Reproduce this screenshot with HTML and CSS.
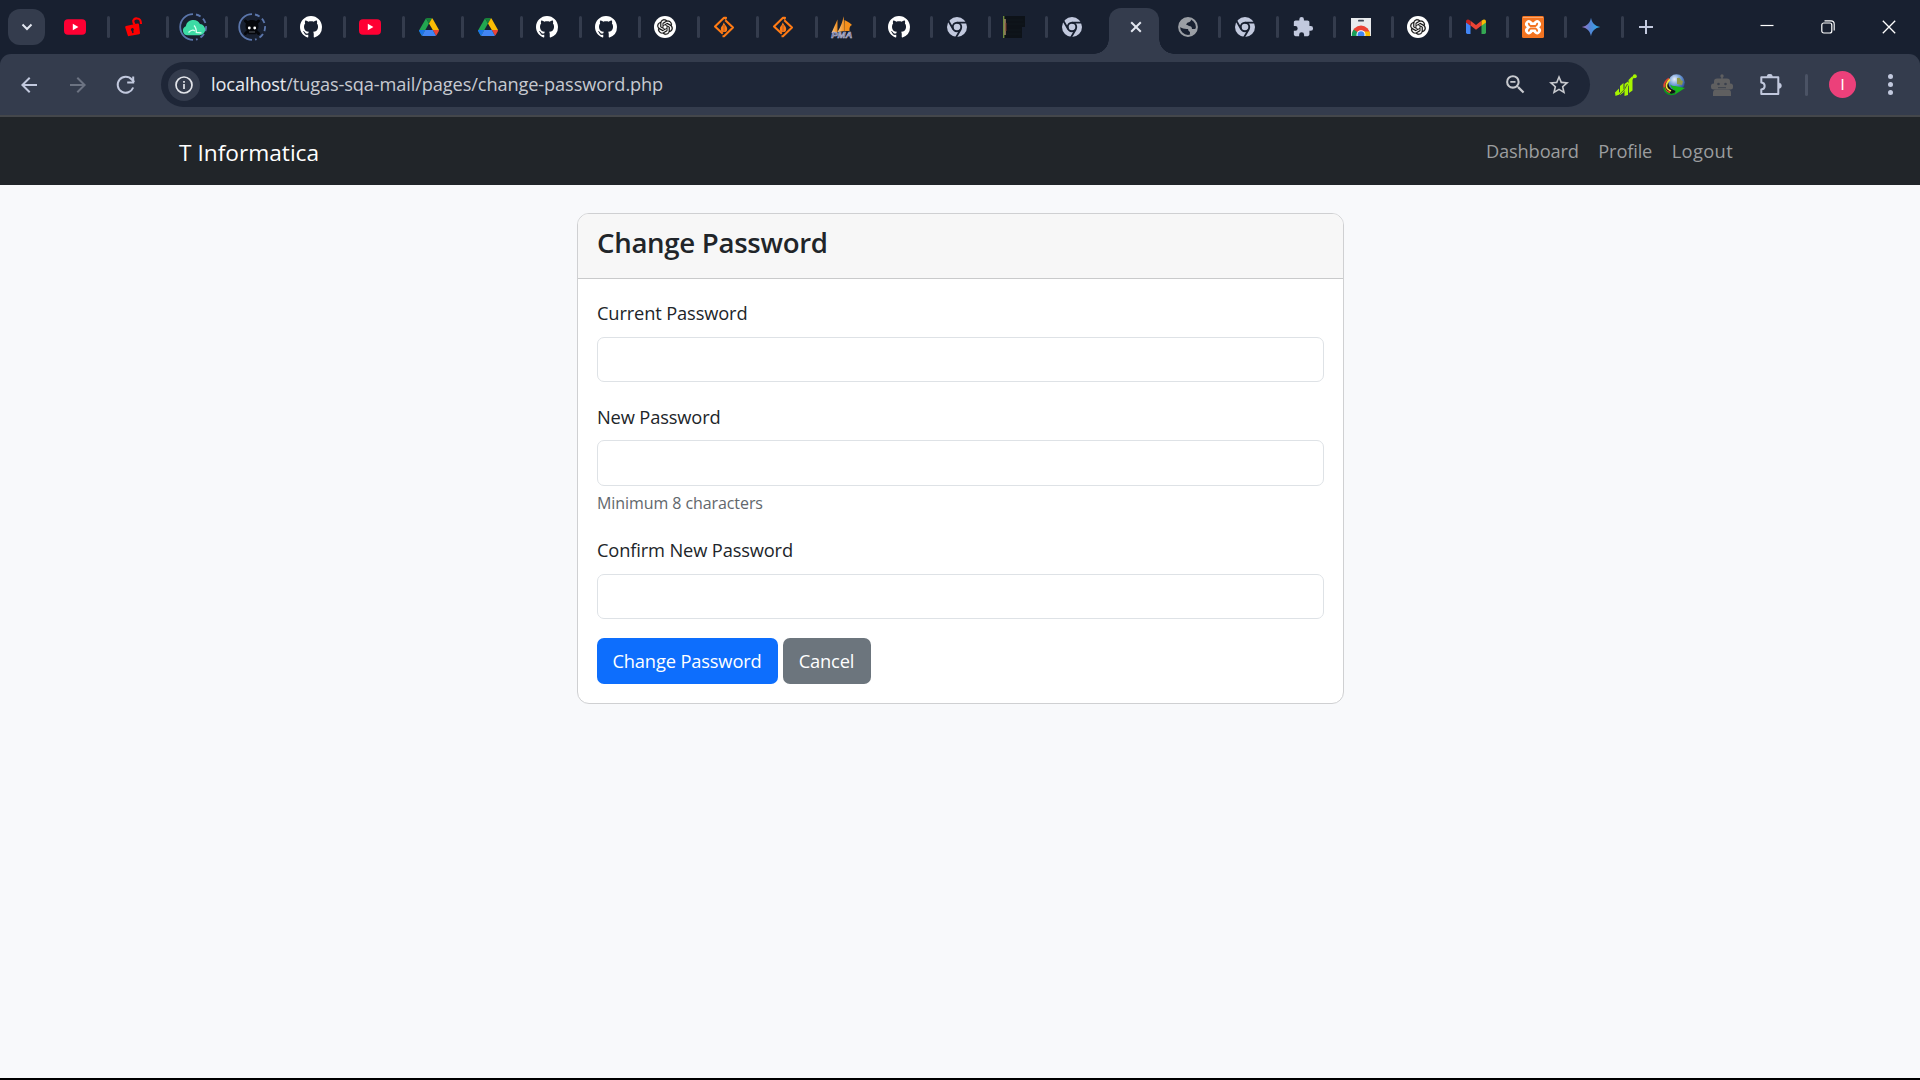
FILE: index.html
```html
<!DOCTYPE html>
<html lang="en">
<head>
<meta charset="utf-8">
<title>Change Password</title>
<link rel="stylesheet" href="styles.css">
</head>
<body>
<svg class="sprite" aria-hidden="true">
  <defs>
    <linearGradient id="gem" x1="0" y1="0" x2="1" y2="0"><stop offset="0" stop-color="#a46fc0"/><stop offset=".45" stop-color="#5585d6"/><stop offset="1" stop-color="#25b0ee"/></linearGradient>
    <linearGradient id="sail" x1="0" y1="0" x2="1" y2="0"><stop offset="0" stop-color="#f9c98c"/><stop offset="1" stop-color="#f08a16"/></linearGradient>
    <radialGradient id="ball" cx=".38" cy=".3" r=".8"><stop offset="0" stop-color="#e9f0fa"/><stop offset=".45" stop-color="#6f9bd6"/><stop offset="1" stop-color="#183a80"/></radialGradient>
    <clipPath id="store-clip"><rect x="1" y="2" width="20" height="18"/></clipPath>
  </defs>
  <symbol id="youtube" viewBox="0 0 22 22"><rect y="3.2" width="22" height="15.6" rx="4" fill="#ff0033"/><path d="M8.8 7.8v6.4l5.6-3.2z" fill="#fff"/></symbol>
  <symbol id="lock" viewBox="0 0 22 22"><path d="M3 10.2l11.6-2.4q1.200-.2 1.400.8l1 8.600q.1 1-.9 1.300l-10 1.800q-1.200.2-1.400-.8L2.200 11.500q-.2-1.100.8-1.300z" fill="#fe0000" transform="translate(0 -.2)"/><path d="M11.500 8.500L10.500 6.600C9.300 3.600 12 2.300 14 2.500C17.500 2.800 18 4.500 18 8" fill="none" stroke="#fe0000" stroke-width="2.200"/><path d="M9.300 12a1.600 1.600 0 0 1 1 2.800l.3 2.300-1.300.2-.6-2.300a1.600 1.600 0 0 1 .6-3z" fill="#182030"/></symbol>
  <symbol id="cloud" viewBox="0 0 28 28"><path d="M14 1.200a12.800 12.800 0 0 0 0 25.600" fill="none" stroke="#5b76ab" stroke-width="1.800"/><path d="M17 1.500a12.800 12.800 0 0 1 0 25" fill="none" stroke="#5b76ab" stroke-width="1.800" stroke-dasharray="5 3.200"/><path d="M9 22.200a4.700 4.700 0 0 1-2.200-9 7.600 7.600 0 0 1 14.200-2.200 5.600 5.600 0 0 1-.8 11.200z" fill="#3ddba5"/><path d="M15 12.500c2 2 2.500 4 2.300 7.500M9.500 19.500c2-2 4-3.500 6.500-1.500M17.500 19.500c1.500 0 3 .3 5 .3" fill="none" stroke="#d8fff0" stroke-width="1.300"/></symbol>
  <symbol id="skull" viewBox="0 0 28 28"><path d="M14 1.200a12.800 12.800 0 0 0 0 25.600" fill="none" stroke="#5b76ab" stroke-width="1.800"/><path d="M17 1.500a12.800 12.800 0 0 1 0 25" fill="none" stroke="#5b76ab" stroke-width="1.800" stroke-dasharray="5 3.200"/><path d="M7.500 8l13 12.500M20.500 8L7.500 20.500" stroke="#05070b" stroke-width="3" stroke-linecap="round"/><path d="M14 7c4.600 0 6.500 2.700 6.500 6.300 0 2.700-1 3.700-2.700 4.400v3.600h-7.600v-3.600c-1.700-.7-2.700-1.700-2.700-4.400C7.500 9.700 9.400 7 14 7z" fill="#05070b"/><circle cx="11.300" cy="15" r="1.400" fill="#fff"/><circle cx="16.700" cy="15" r="1.400" fill="#fff"/><path d="M11 19h6" stroke="#777c85" stroke-width=".7"/></symbol>
  <symbol id="github" viewBox="0 0 16 16"><path fill="#fff" d="M8 0C3.580 0 0 3.580 0 8c0 3.540 2.290 6.530 5.470 7.590.4.070.55-.17.55-.38 0-.19-.01-.82-.01-1.490-2.010.37-2.530-.49-2.690-.94-.09-.23-.48-.94-.82-1.130-.28-.15-.68-.52-.01-.53.63-.01 1.080.58 1.230.82.72 1.210 1.870.87 2.330.66.07-.52.28-.87.51-1.070-1.780-.2-3.640-.89-3.640-3.950 0-.87.31-1.590.82-2.150-.08-.2-.36-1.020.08-2.120 0 0 .67-.21 2.200.82.64-.18 1.320-.27 2-.27s1.360.09 2 .27c1.530-1.040 2.200-.82 2.200-.82.44 1.100.16 1.920.08 2.120.51.56.82 1.270.82 2.150 0 3.070-1.870 3.750-3.650 3.950.29.25.54.73.54 1.480 0 1.070-.01 1.930-.01 2.200 0 .21.15.46.55.38A8.010 8.010 0 0 0 16 8c0-4.420-3.580-8-8-8z"/></symbol>
  <symbol id="drive" viewBox="0 0 22 22"><path d="M1 14.500L8 2.300l3 5.200-6.900 12.200q-.5-.3-.8-.8z" fill="#22a650"/><path d="M8 2.300q.4-.3 1-.3h4q.6 0 1 .3l-3 5.200z" fill="#188038"/><path d="M14 2.300q.5.300.8.800L21 14h-6.200L11 7.500z" fill="#fbbc04"/><path d="M1 14h6.200l-3.100 5.700q-.6-.3-.9-.9L1.300 15.500Q1 14.800 1 14z" fill="#1a73e8"/><path d="M14.800 14H21q0 .8-.3 1.500l-1.900 3.300q-.3.600-.9.900z" fill="#ea4335"/><path d="M7.200 14h7.600l3.100 5.700q-.4.300-1 .3H5.100q-.6 0-1-.3z" fill="#4285f4"/></symbol>
  <symbol id="gpt" viewBox="0 0 22 22"><circle cx="11" cy="11" r="11" fill="#fff"/><path transform="translate(3.200 3.200) scale(.65)" fill="#0c0c0c" stroke="#0c0c0c" stroke-width=".3" d="M22.2819 9.8211a5.9847 5.9847 0 0 0-.5157-4.9108 6.0462 6.0462 0 0 0-6.5098-2.9A6.0651 6.0651 0 0 0 4.9807 4.1818a5.9847 5.9847 0 0 0-3.9977 2.9 6.0462 6.0462 0 0 0 .7427 7.0966 5.98 5.98 0 0 0 .511 4.9107 6.051 6.051 0 0 0 6.5146 2.9001A5.9847 5.9847 0 0 0 13.2599 24a6.0557 6.0557 0 0 0 5.7718-4.2058 5.9894 5.9894 0 0 0 3.9977-2.9001 6.0557 6.0557 0 0 0-.7475-7.0729zm-9.022 12.6081a4.4755 4.4755 0 0 1-2.8764-1.0408l.1419-.0804 4.7783-2.7582a.7948.7948 0 0 0 .3927-.6813v-6.7369l2.02 1.1686a.071.071 0 0 1 .038.052v5.5826a4.504 4.504 0 0 1-4.4945 4.4944zm-9.6607-4.1254a4.4708 4.4708 0 0 1-.5346-3.0137l.142.0852 4.783 2.7582a.7712.7712 0 0 0 .7806 0l5.8428-3.3685v2.3324a.0804.0804 0 0 1-.0332.0615L9.74 19.9502a4.4992 4.4992 0 0 1-6.1408-1.6464zM2.3408 7.8956a4.485 4.485 0 0 1 2.3655-1.9728V11.6a.7664.7664 0 0 0 .3879.6765l5.8144 3.3543-2.0201 1.1685a.0757.0757 0 0 1-.071 0l-4.8303-2.7865A4.504 4.504 0 0 1 2.3408 7.872zm16.5963 3.8558L13.1038 8.364 15.1192 7.2a.0757.0757 0 0 1 .071 0l4.8303 2.7913a4.4944 4.4944 0 0 1-.6765 8.1042v-5.6772a.79.79 0 0 0-.407-.667zm2.0107-3.0231l-.142-.0852-4.7735-2.7818a.7759.7759 0 0 0-.7854 0L9.409 9.2297V6.8974a.0662.0662 0 0 1 .0284-.0615l4.8303-2.7866a4.4992 4.4992 0 0 1 6.6802 4.66zM8.3065 12.863l-2.02-1.1638a.0804.0804 0 0 1-.038-.0567V6.0742a4.4992 4.4992 0 0 1 7.3757-3.4537l-.142.0805L8.704 5.459a.7948.7948 0 0 0-.3927.6813zm1.0976-2.3654l2.602-1.4998 2.6069 1.4998v2.9994l-2.5974 1.4997-2.6067-1.4997Z"/></symbol>
  <symbol id="forge" viewBox="0 0 22 22"><path d="M9.800 17.800L2 10.400 11 1.800h2L12 3.300M12.300 4.200L20 11.600 11 20.200H9.500" fill="none" stroke="#ff7b15" stroke-width="2.100" stroke-linejoin="round"/><path d="M11 6.300c.3 2.700 3.200 4 3.200 6.600a3.200 3.200 0 0 1-6.400 0c0-2.200 1.400-2.600 1.900-3.900.5-1 .6-1.800 1.300-2.700z" fill="#ff7b15"/><path d="M11 9v6.500" stroke="#a85a28" stroke-width="1"/></symbol>
  <symbol id="chrome" viewBox="0 0 22 22"><circle cx="11" cy="11" r="10" fill="#c2c9de"/><circle cx="11" cy="11" r="5.200" fill="#182030"/><circle cx="11" cy="11" r="3.300" fill="#c2c9de"/><path d="M11 6.600H21M7.200 13.200L2.200 4.500M14.800 13.200L9.800 21.800" stroke="#182030" stroke-width="1.800"/></symbol>
  <symbol id="dark" viewBox="0 0 22 22"><path d="M1 0h21v11h-3v11H1z" fill="#0d1218"/><path d="M3 4h17M3 8h18M3 14h15M3 18h15" stroke="#11171d"/><path d="M.7 0v22" stroke="#6c8a3d" stroke-width="1.400"/><path d="M2 3v16" stroke="#c9a878" stroke-width="1.200"/><path d="M3 7v8" stroke="#8b3a2a" stroke-width=".8"/></symbol>
  <symbol id="globe" viewBox="0 0 22 22"><circle cx="11" cy="11" r="8.900" fill="none" stroke="#9b9fa5" stroke-width="2"/><path d="M3 8C5 3 10 1.500 14 3q.5 2-1.500 3Q10 6 9 8.500q2 .5 3 1.500 3 0 3 3h3.500q.5-2 1.500-2-.5 6-6.500 8.500-1-2-.5-3.500-2-1-2-3Q7 13.500 2.500 11z" fill="#9b9fa5"/></symbol>
  <symbol id="puzzle" viewBox="0 0 24 24"><path fill="#c2c9de" d="M20.500 11H19V7c0-1.100-.9-2-2-2h-4V3.500a2.500 2.500 0 0 0-5 0V5H4c-1.100 0-1.990.9-1.990 2v3.800H3.500a2.700 2.700 0 0 1 0 5.400H2V20c0 1.100.9 2 2 2h3.800v-1.500a2.700 2.700 0 0 1 5.400 0V22H17c1.100 0 2-.9 2-2v-4h1.500a2.500 2.500 0 0 0 0-5z"/></symbol>
  <symbol id="store" viewBox="0 0 22 22"><g clip-path="url(#store-clip)"><path d="M1 2h20v18H1z" fill="#e8eaed"/><rect x="8" y="3.800" width="6" height="1.800" rx=".9" fill="#3c4454"/><circle cx="11" cy="18.500" r="9" fill="#ea4335"/><path d="M11 18.500V15.500h8.500a9 9 0 0 1 0 6.500h-9z" fill="#fbbc04"/><path d="M11 18.500L3.500 13.500Q1 18 2 22h9z" fill="#18a05a"/><circle cx="11" cy="18.800" r="4.500" fill="#fff"/><circle cx="11" cy="18.800" r="3.500" fill="#4285f4"/></g></symbol>
  <symbol id="gmail" viewBox="0 0 22 22"><path d="M1 6l4.500 3.200V18H2.400Q1 18 1 16.600z" fill="#4285f4"/><path d="M16.500 9.200L21 6v10.600Q21 18 19.600 18h-3.100z" fill="#34a853"/><path d="M5.500 4.800L11 9l5.500-4.200v4.800L11 13.800 5.500 9.600z" fill="#ea4335"/><path d="M1 5.500Q1 3.500 2.800 3.400 3.700 3.400 5.500 4.800v5L1 6.500z" fill="#c5221f"/><path d="M16.500 4.800q1.800-1.400 2.700-1.400Q21 3.500 21 5.500v1l-4.500 3.300z" fill="#fbbc04"/></symbol>
  <symbol id="xampp" viewBox="0 0 22 22"><rect width="22" height="22" rx="1.500" fill="#f37421"/><path d="M1 1.500h20" stroke="#f9a56d"/><path d="M6.800 8L11 11.200 15.200 8M6.800 14.500L11 11.200l4.200 3.300" fill="none" stroke="#fff" stroke-width="7.400" stroke-linecap="round" stroke-linejoin="round"/><path d="M11 1.900l1.300 3.300L11 6.400 9.700 5.200zM11 20.500l1.300-3.300L11 16 9.700 17.200z" fill="#f37421"/><path d="M6.800 7.700q.2 1.500 1.700 2.300h5q1.500-.8 1.700-2.300M6.800 14.800q.2-1.500 1.700-2.300h5q1.500.8 1.700 2.300" fill="none" stroke="#f37421" stroke-width="1.900" stroke-linecap="round"/></symbol>
  <symbol id="gemini" viewBox="0 0 22 22"><path d="M11 1.800c.8 5 4.200 8.400 9.200 9.200-5 .8-8.400 4.200-9.200 9.200-.8-5-4.200-8.400-9.200-9.200 5-.8 8.400-4.200 9.200-9.200z" fill="url(#gem)"/></symbol>
  <symbol id="arrow" viewBox="0 0 24 24"><path fill="currentColor" d="M20 11H7.830l5.590-5.590L12 4l-8 8 8 8 1.410-1.410L7.830 13H20v-2z"/></symbol>
</svg>

<header class="browser">
  <div class="tabstrip">
    <button class="tab-search"><svg width="12" height="8" viewBox="0 0 12 8"><path d="M1.500 1.500L6 6l4.500-4.500" fill="none" stroke="#e3e7f0" stroke-width="2"/></svg></button>
    <div class="tabs">
      <div class="tab"><svg><use href="#youtube"/></svg></div>
      <div class="tab"><svg><use href="#lock"/></svg></div>
      <div class="tab ringed"><svg><use href="#cloud"/></svg></div>
      <div class="tab ringed"><svg><use href="#skull"/></svg></div>
      <div class="tab"><svg><use href="#github"/></svg></div>
      <div class="tab"><svg><use href="#youtube"/></svg></div>
      <div class="tab"><svg><use href="#drive"/></svg></div>
      <div class="tab"><svg><use href="#drive"/></svg></div>
      <div class="tab"><svg><use href="#github"/></svg></div>
      <div class="tab"><svg><use href="#github"/></svg></div>
      <div class="tab"><svg><use href="#gpt"/></svg></div>
      <div class="tab"><svg><use href="#forge"/></svg></div>
      <div class="tab"><svg><use href="#forge"/></svg></div>
      <div class="tab narrow"><svg viewBox="0 0 22 22"><path d="M.5 17Q4 9 6.500 3.500V16z" fill="url(#sail)"/><path d="M6.500 16Q11.500 8 12.500.3q1.200 8 1 14.700z" fill="url(#sail)"/><path d="M13.500 4q6 3 7.500 5-3 1-2.500 6h-5z" fill="#f5901c"/><text class="pma" x=".3" y="21.700" textLength="21" lengthAdjust="spacingAndGlyphs">PMA</text></svg></div>
      <div class="tab narrow"><svg><use href="#github"/></svg></div>
      <div class="tab narrow"><svg><use href="#chrome"/></svg></div>
      <div class="tab narrow"><svg><use href="#dark"/></svg></div>
      <div class="tab narrow plain"><svg><use href="#chrome"/></svg></div>
      <div class="tab-active"><svg width="12" height="12" viewBox="0 0 12 12"><path d="M1.200 1.200l9.600 9.600M10.800 1.200l-9.600 9.600" stroke="#e3e7f0" stroke-width="2"/></svg></div>
      <div class="tab narrow"><svg><use href="#globe"/></svg></div>
      <div class="tab narrow"><svg><use href="#chrome"/></svg></div>
      <div class="tab narrow"><svg><use href="#puzzle"/></svg></div>
      <div class="tab narrow"><svg><use href="#store"/></svg></div>
      <div class="tab narrow"><svg><use href="#gpt"/></svg></div>
      <div class="tab narrow"><svg><use href="#gmail"/></svg></div>
      <div class="tab narrow"><svg><use href="#xampp"/></svg></div>
      <div class="tab narrow"><svg><use href="#gemini"/></svg></div>
    </div>
    <svg class="new-tab" width="14" height="14" viewBox="0 0 14 14"><path d="M7 0v14M0 7h14" stroke="#c2c9de" stroke-width="2"/></svg>
    <div class="window-buttons">
      <svg width="14" height="14" viewBox="0 0 14 14"><path d="M.5 5.500h13" stroke="#fff" stroke-width="1.200"/></svg>
      <svg width="14" height="14" viewBox="0 0 14 14"><rect x=".8" y="3" width="10" height="10" rx="2" fill="none" stroke="#fff" stroke-width="1.200"/><path d="M3.500 .9H10a3.200 3.200 0 0 1 3.200 3.200v6.400" fill="none" stroke="#fff" stroke-width="1.100"/></svg>
      <svg width="14" height="14" viewBox="0 0 14 14"><path d="M.8.8l12.400 12.400M13.200.8L.8 13.200" stroke="#fff" stroke-width="1.300"/></svg>
    </div>
  </div>

  <div class="toolbar">
    <div class="nav-buttons">
      <svg class="back"><use href="#arrow"/></svg>
      <svg class="forward"><use href="#arrow"/></svg>
      <svg class="reload" viewBox="0 0 24 24"><path d="M19.200 14.500a8 8 0 1 1-1.400-8L20.200 9" fill="none" stroke="#c2c9de" stroke-width="2"/><path d="M19.200 3.500v6h-6" fill="none" stroke="#c2c9de" stroke-width="2"/></svg>
    </div>
    <div class="omnibox">
      <span class="site-info"><svg width="18" height="18" viewBox="0 0 18 18"><circle cx="9" cy="9" r="8" fill="none" stroke="#e3e5ea" stroke-width="1.700"/><path d="M9 8v5M9 5v1.700" stroke="#e3e5ea" stroke-width="1.700"/></svg></span>
      <span class="url"><b>localhost</b>/tugas-sqa-mail/pages/change-password.php</span>
      <svg class="omni-icon" viewBox="0 0 24 24"><path fill="#c7c9ce" d="M15.500 14h-.79l-.28-.27A6.470 6.470 0 0 0 16 9.500 6.500 6.500 0 1 0 9.500 16c1.610 0 3.090-.59 4.230-1.570l.27.28v.79l5 4.990L20.490 19l-4.990-5zm-6 0C7.010 14 5 11.990 5 9.500S7.010 5 9.500 5 14 7.010 14 9.500 11.990 14 9.500 14zM7 8.700h5v1.600H7z"/></svg>
      <svg class="omni-icon star" viewBox="0 0 24 24"><path fill="#c7c9ce" d="M22 9.240l-7.190-.62L12 2 9.190 8.630 2 9.240l5.460 4.730L5.820 21 12 17.270 18.180 21l-1.630-7.030L22 9.240zM12 15.400l-3.760 2.270 1-4.280-3.320-2.880 4.380-.38L12 6.100l1.710 4.040 4.380.38-3.320 2.880 1 4.280L12 15.400z"/></svg>
    </div>
    <div class="extensions">
      <svg width="22" height="22" viewBox="0 0 22 22"><g fill="#a6f500"><path d="M0 18.500l4-4v6L.500 22z"/><path d="M5 12l3.500-3v9.500L5 21z"/><path d="M9.500 10L13 7.500V21l-3.500 1z"/><path d="M13.500 6l4-4v14.500l-3.500 2.500z"/><circle cx="19.800" cy="2.200" r="2"/></g><path d="M2 20.500C6 19 10 16 13 11S17 3.500 20 2" fill="none" stroke="#a6f500" stroke-width="1.500"/><path d="M5 20q5-4 7.500-10" fill="none" stroke="#3f5b22" stroke-width=".8"/></svg>
      <svg width="22" height="22" viewBox="0 0 22 22"><path d="M7 3.500C-1.500 8-1 19 8 20.500l5-3L6 12z" fill="#111"/><circle cx="13.500" cy="8.500" r="8.300" fill="url(#ball)"/><path d="M14 4q3-1 3.500 1t2.500 2l-1 4-5-1z" fill="#8f9a46"/><path d="M6 4.500C-1 9 0 17 7 18.500" fill="none" stroke="#e0442f" stroke-width="1.800"/><path d="M7 5.500C2 10 2 14.500 8 17" fill="none" stroke="#f5e03c" stroke-width="1.700"/><path d="M1 13.500Q2 19.500 8 20.500L12 20" fill="none" stroke="#0c9a20" stroke-width="1.600"/><path d="M7 10.500q3 2 5 1.500l10 2-10 6.500 .5-4Q9 16 7 10.500z" fill="#18b81c"/></svg>
      <svg width="22" height="22" viewBox="0 0 22 22"><g fill="#5f5f60"><circle cx="11" cy="2" r="1.700"/><path d="M10.300 2h1.400v3h-1.400z"/><rect x="3" y="4.500" width="16" height="10.500" rx="3"/><rect x="0" y="9.500" width="22" height="6" rx="2.500"/><path d="M2 22v-3q0-3.500 3-3.500h12q3 0 3 3.500v3z"/></g><circle cx="7.500" cy="10" r="1.300" fill="#3a404c"/><circle cx="14.500" cy="10" r="1.300" fill="#3a404c"/><path d="M7 13.700h8" stroke="#3a404c" stroke-width="1"/></svg>
      <svg class="ext-menu" width="22" height="22" viewBox="0 0 22 22"><path d="M1.300 3.200h17V20H1.300v-4.500c4.500-.5 4.500-6.500 0-7z" fill="none" stroke="#c2c9de" stroke-width="2" stroke-linejoin="round"/><path d="M7 2.800a2.700 2.700 0 0 1 5.400 0zM18.700 9a2.700 2.700 0 0 1 0 5.400z" fill="#c2c9de" stroke="#c2c9de" stroke-width=".6"/></svg>
    </div>
    <span class="divider"></span>
    <span class="avatar">I</span>
    <span class="menu"><i></i><i></i><i></i></span>
  </div>
</header>

<nav class="navbar">
  <a class="brand">T Informatica</a>
  <div class="links"><a>Dashboard</a><a>Profile</a><a class="logout">Logout</a></div>
</nav>

<main class="page">
  <section class="card">
    <div class="card-header"><h4>Change Password</h4></div>
    <form class="card-body">
      <div class="field first"><label for="cur">Current Password</label><input id="cur" type="password"></div>
      <div class="field with-hint"><label for="new">New Password</label><input id="new" type="password"><small>Minimum 8 characters</small></div>
      <div class="field"><label for="conf">Confirm New Password</label><input id="conf" type="password"></div>
      <div class="actions"><button class="btn primary" type="button">Change Password</button><a class="btn secondary">Cancel</a></div>
    </form>
  </section>
</main>
</body>
</html>
```
FILE: styles.css
```css
* { box-sizing: border-box; }

body {
  margin: 0;
  height: 1080px;
  display: flex;
  flex-direction: column;
  overflow: hidden;
  background: #f8f9fb;
  border-bottom: 2px solid #000;
  color: #212529;
  font-family: "Open Sans", "Noto Sans", sans-serif;
  font-size: 18.3px;
  letter-spacing: -0.15px;
}

.sprite { position: absolute; width: 0; height: 0; }

/* Browser chrome */
.browser { flex: none; height: 117px; background: #182030; border-bottom: 2px solid #44474b; }

.tabstrip { display: flex; align-items: center; height: 54px; }

.tab-search {
  display: flex;
  align-items: center;
  justify-content: center;
  width: 37px;
  height: 36px;
  margin: 0 6px 0 8px;
  padding: 0;
  border: 0;
  border-radius: 12px;
  background: #343c4d;
}

.tabs { display: flex; align-items: center; height: 54px; }

.tab {
  display: flex;
  align-items: center;
  justify-content: space-between;
  width: 59px;
  height: 54px;
  padding-left: 13px;
}
.tab svg { width: 22px; height: 22px; overflow: visible; }
.tab::after { content: ""; width: 3px; height: 22px; border-radius: 2px; background: #343c4d; }
.tab.ringed { padding-left: 10px; }
.tab.ringed svg { width: 28px; height: 28px; }
.tab.narrow { width: 57.6px; padding-left: 12.6px; }
.tab-active ~ .tab.narrow { padding-left: 13.2px; }
.tab.plain::after { visibility: hidden; }

.pma {
  font: italic bold 9px "Liberation Sans", sans-serif;
  letter-spacing: 0;
  fill: #5a5a8e;
  stroke: #c9c9dd;
  stroke-width: 0.5px;
}

.tab-active {
  position: relative;
  display: flex;
  align-items: center;
  justify-content: center;
  width: 50px;
  height: 46px;
  margin: 8px 5px 0 2.6px;
  padding: 0 0 8px 5px;
  border-radius: 12px 12px 0 0;
  background: #343c4d;
}
.tab-active::before,
.tab-active::after {
  content: "";
  position: absolute;
  bottom: 0;
  width: 15px;
  height: 15px;
}
.tab-active::before { right: 100%; background: radial-gradient(circle at 0 0, transparent 14.5px, #343c4d 15px); }
.tab-active::after { left: 100%; background: radial-gradient(circle at 100% 0, transparent 14.5px, #343c4d 15px); }

.new-tab { margin-left: 15px; }

.window-buttons { display: flex; gap: 47px; margin: 0 24px 0 auto; }

.toolbar {
  display: flex;
  align-items: center;
  height: 61px;
  border-radius: 11px 11px 0 0;
  background: #343c4d;
}

.nav-buttons { display: flex; gap: 24.5px; width: 161px; padding-left: 17px; }
.nav-buttons svg { width: 24px; height: 24px; color: #c2c9de; }
.nav-buttons .forward { color: #6c7382; transform: scaleX(-1); }

.omnibox {
  display: flex;
  align-items: center;
  width: 1429px;
  height: 45px;
  padding: 0 19px 0 7px;
  border-radius: 23px;
  background: #1e2637;
}
.site-info {
  display: flex;
  align-items: center;
  justify-content: center;
  width: 32px;
  height: 32px;
  border-radius: 50%;
  background: #343c4d;
}
.url { margin: 0 auto 0 11px; padding-bottom: 2px; color: #c7cad1; font-size: 18.2px; letter-spacing: -0.11px; }
.url b { color: #e8eaef; font-weight: 400; }
.omni-icon { width: 25px; height: 25px; }
.star { width: 24px; height: 24px; margin-left: 19px; }

.extensions { display: flex; gap: 26px; margin-left: 25px; }
.ext-menu { margin-left: 1px; }
.divider { width: 3px; height: 22px; margin-left: 23px; border-radius: 2px; background: #4b5365; }
.avatar {
  display: flex;
  align-items: center;
  justify-content: center;
  width: 27px;
  height: 27px;
  margin-left: 21px;
  border-radius: 50%;
  background: #ec407a;
  color: #fff;
  font: 15px Roboto, sans-serif;
}
.menu { display: grid; gap: 3px; margin-left: 32px; }
.menu i { width: 5px; height: 5px; border-radius: 50%; background: #c2c9de; }

/* Site */
.navbar {
  flex: none;
  display: flex;
  align-items: center;
  justify-content: space-between;
  height: 68px;
  padding: 0 187px 0 179px;
  background: #212529;
}
.brand { padding-top: 2px; color: #fff; font-size: 22.7px; letter-spacing: 0; }
.links { display: flex; gap: 19.5px; margin-top: -2px; color: #9b9d9f; letter-spacing: -0.17px; }
.logout { letter-spacing: 0.35px; }

.page { display: flex; justify-content: center; padding-top: 28px; }

.card {
  width: 767px;
  height: 491px;
  border: 1px solid #cfd0d2;
  border-radius: 12px;
  background: #fff;
  overflow: hidden;
}
.card-header { height: 65px; padding: 9px 19.5px; border-bottom: 1px solid #c9cacb; background: #f7f7f7; }
h4 { margin: 0; font-size: 27.6px; line-height: 39px; font-weight: 600; letter-spacing: -0.3px; }

.card-body { padding: 20px 19px 0; }
.field { display: flex; flex-direction: column; margin-bottom: 19px; }
.field.first { margin-bottom: 20px; }
.field label { height: 38px; padding-left: 0.5px; line-height: 27px; }
.field input { height: 45px; padding: 0 14px; border: 1px solid #dee2e6; border-radius: 7px; background: #fff; }
.with-hint label { line-height: 29px; }
.with-hint input { height: 46px; }
.field small { height: 31px; padding: 5px 0 0 0.5px; line-height: 25px; color: #62676c; font-size: 16px; letter-spacing: -0.08px; }

.actions { display: flex; gap: 5px; }
.btn {
  display: flex;
  align-items: center;
  justify-content: center;
  height: 46px;
  padding: 0 0 2px;
  border: 0;
  border-radius: 7px;
  color: #fff;
  font: inherit;
  letter-spacing: inherit;
}
.primary { width: 181px; background: #0d6efd; }
.secondary { width: 88px; background: #6c757d; }
```
